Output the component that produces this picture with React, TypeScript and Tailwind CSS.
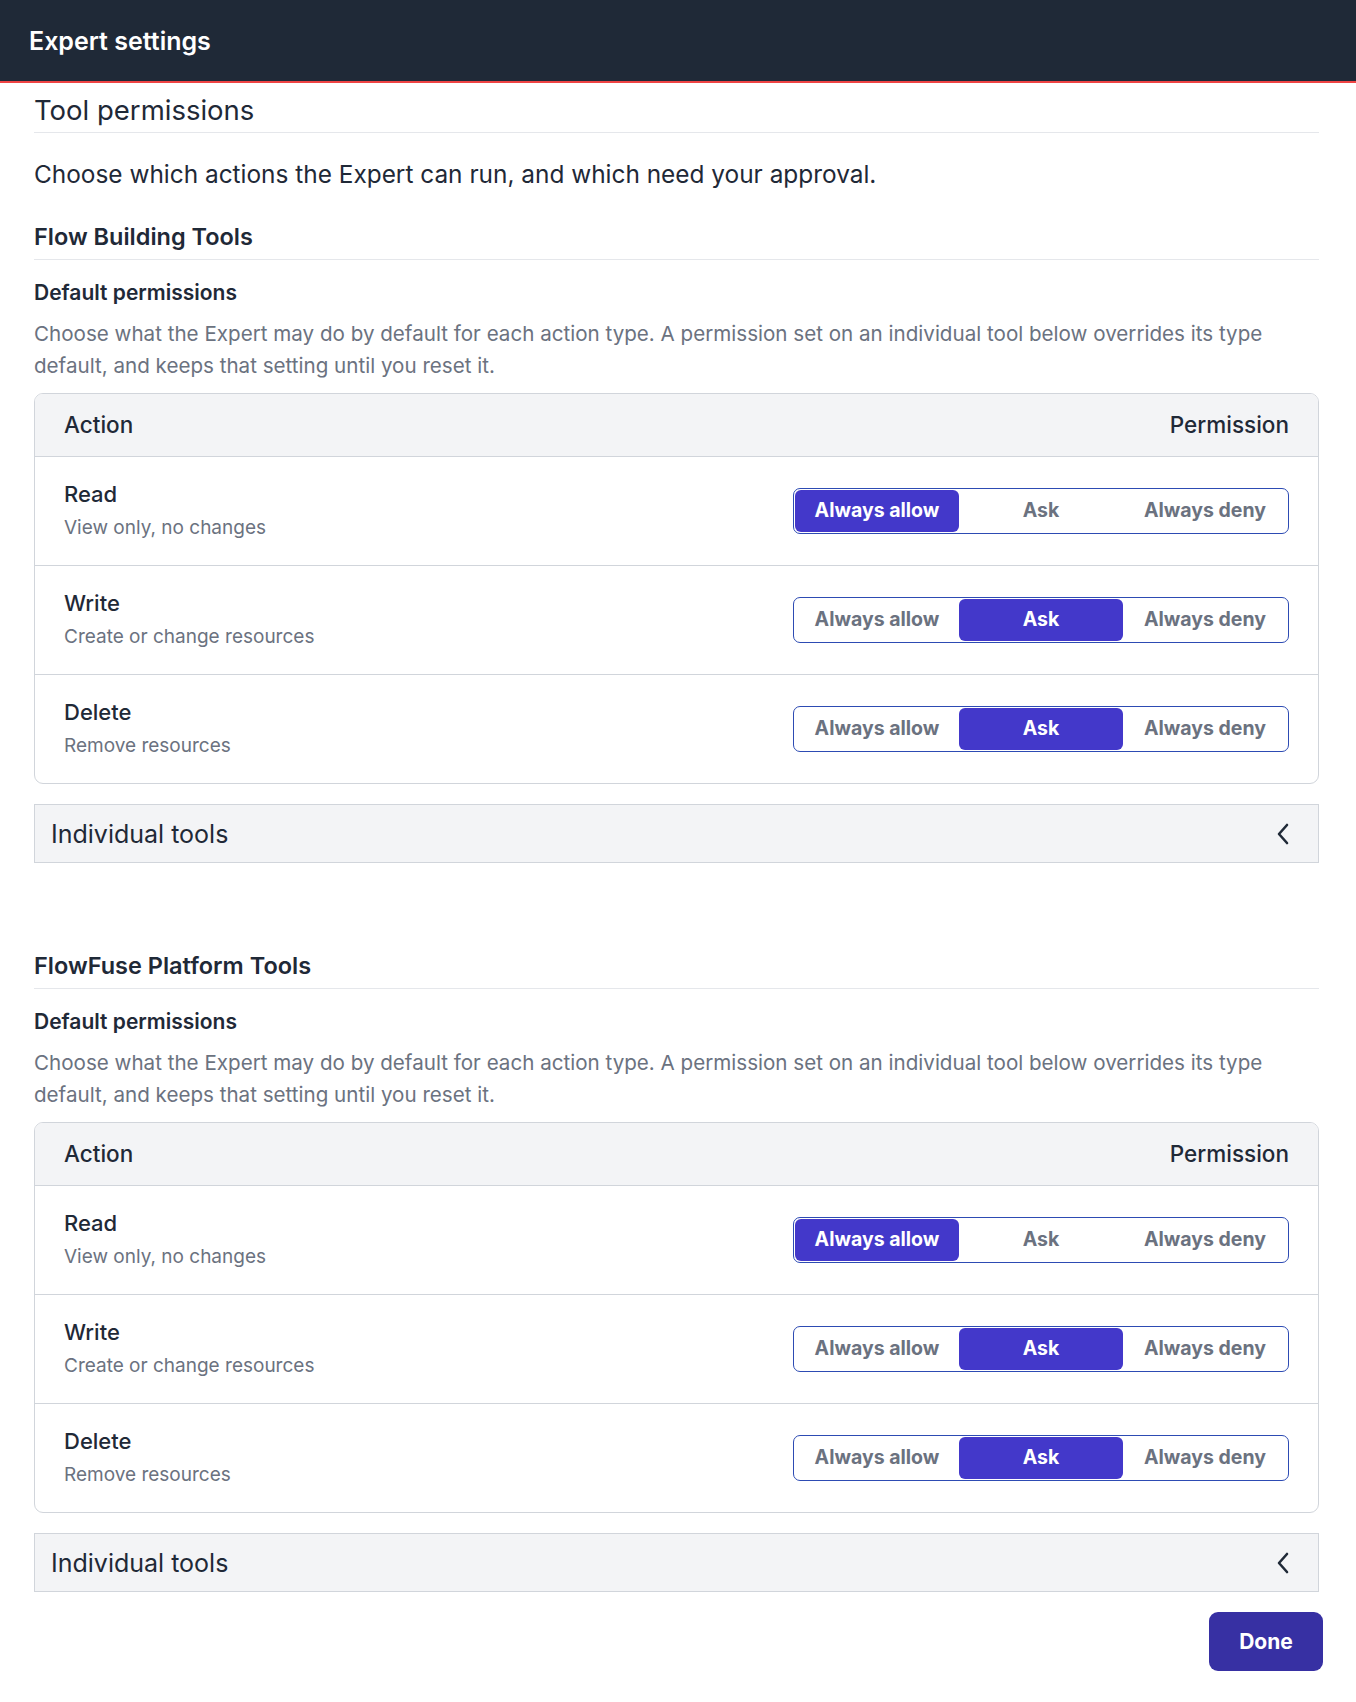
import React from "react";

type Level = "allow" | "ask" | "deny";

const OPTIONS: { key: Level; label: string }[] = [
  { key: "allow", label: "Always allow" },
  { key: "ask", label: "Ask" },
  { key: "deny", label: "Always deny" },
];

const ROWS: { name: string; hint: string; value: Level }[] = [
  { name: "Read", hint: "View only, no changes", value: "allow" },
  { name: "Write", hint: "Create or change resources", value: "ask" },
  { name: "Delete", hint: "Remove resources", value: "ask" },
];

function Segmented({ value }: { value: Level }) {
  return (
    <div className="flex h-[46px] w-[496px] items-stretch rounded-[7px] border border-[#2d4bb3] bg-white p-[1px]">
      {OPTIONS.map((o) => (
        <button
          key={o.key}
          className={
            o.key === value
              ? "flex-1 rounded-[6px] bg-[#4338ca] text-[19.5px] font-bold text-white"
              : "flex-1 rounded-[6px] text-[19.5px] font-bold text-[#6b7280]"
          }
        >
          {o.label}
        </button>
      ))}
    </div>
  );
}

function Chevron() {
  return (
    <svg width="14" height="22" viewBox="0 0 14 22" fill="none">
      <path
        d="M11 2 L3 11 L11 20"
        stroke="#1f2937"
        strokeWidth="2.6"
        strokeLinecap="round"
        strokeLinejoin="round"
      />
    </svg>
  );
}

function ToolGroup({ title }: { title: string }) {
  return (
    <section>
      <h3 className="border-b border-[#e5e7eb] pb-[6px] text-[23.5px] font-semibold leading-[32px] text-[#1f2937]">
        {title}
      </h3>
      <h4 className="mt-[18px] text-[21px] font-semibold leading-[30px] text-[#1f2937]">
        Default permissions
      </h4>
      <p className="mt-[10px] max-w-[1250px] text-[20.6px] leading-[32px] text-[#6b7280]">
        Choose what the Expert may do by default for each action type. A permission set on an
        individual tool below overrides its type default, and keeps that setting until you reset
        it.
      </p>
      <div className="mt-[11px] overflow-hidden rounded-[9px] border border-[#d1d5db]">
        <div className="flex h-[63px] items-center justify-between border-b border-[#d1d5db] bg-[#f3f4f6] px-[29px] text-[22.5px] font-medium text-[#1f2937]">
          <span>Action</span>
          <span>Permission</span>
        </div>
        {ROWS.map((r, i) => (
          <div
            key={r.name}
            className={
              i < ROWS.length - 1
                ? "flex h-[109px] items-center justify-between border-b border-[#d1d5db] px-[29px]"
                : "flex h-[108px] items-center justify-between px-[29px]"
            }
          >
            <div>
              <div className="text-[22px] font-medium leading-[34px] text-[#1f2937]">{r.name}</div>
              <div className="text-[19px] leading-[34px] text-[#6b7280]">{r.hint}</div>
            </div>
            <Segmented value={r.value} />
          </div>
        ))}
      </div>
      <div className="mt-[20px] flex h-[59px] items-center justify-between border border-[#d1d5db] bg-[#f3f4f6] pl-[16px] pr-[28px]">
        <span className="text-[25px] leading-[32px] text-[#1f2937]">Individual tools</span>
        <Chevron />
      </div>
    </section>
  );
}

export default function App() {
  return (
    <div
      className="min-h-[1702px] w-[1356px] bg-white"
      style={{ fontFamily: "Inter, 'Noto Sans', sans-serif" }}
    >
      <header className="flex h-[83px] items-center border-b-2 border-[#ef4444] bg-[#1f2937] px-[29px]">
        <h1 className="pt-[2px] text-[25px] font-semibold text-white">Expert settings</h1>
      </header>
      <main className="pl-[34px] pr-[37px] pt-[9px]">
        <h2 className="border-b border-[#e5e7eb] pb-[4px] text-[27.5px] leading-[36px] text-[#1f2937]">
          Tool permissions
        </h2>
        <p className="mt-[23px] text-[24.4px] leading-[36px] text-[#1f2937]">
          Choose which actions the Expert can run, and which need your approval.
        </p>
        <div className="mt-[29px]">
          <ToolGroup title="Flow Building Tools" />
        </div>
        <div className="mt-[87px]">
          <ToolGroup title="FlowFuse Platform Tools" />
        </div>
        <div className="-mr-[4px] mt-[20px] flex justify-end">
          <button className="h-[59px] w-[114px] rounded-[9px] bg-[#3730a3] text-[21px] font-bold text-white">
            Done
          </button>
        </div>
      </main>
    </div>
  );
}
